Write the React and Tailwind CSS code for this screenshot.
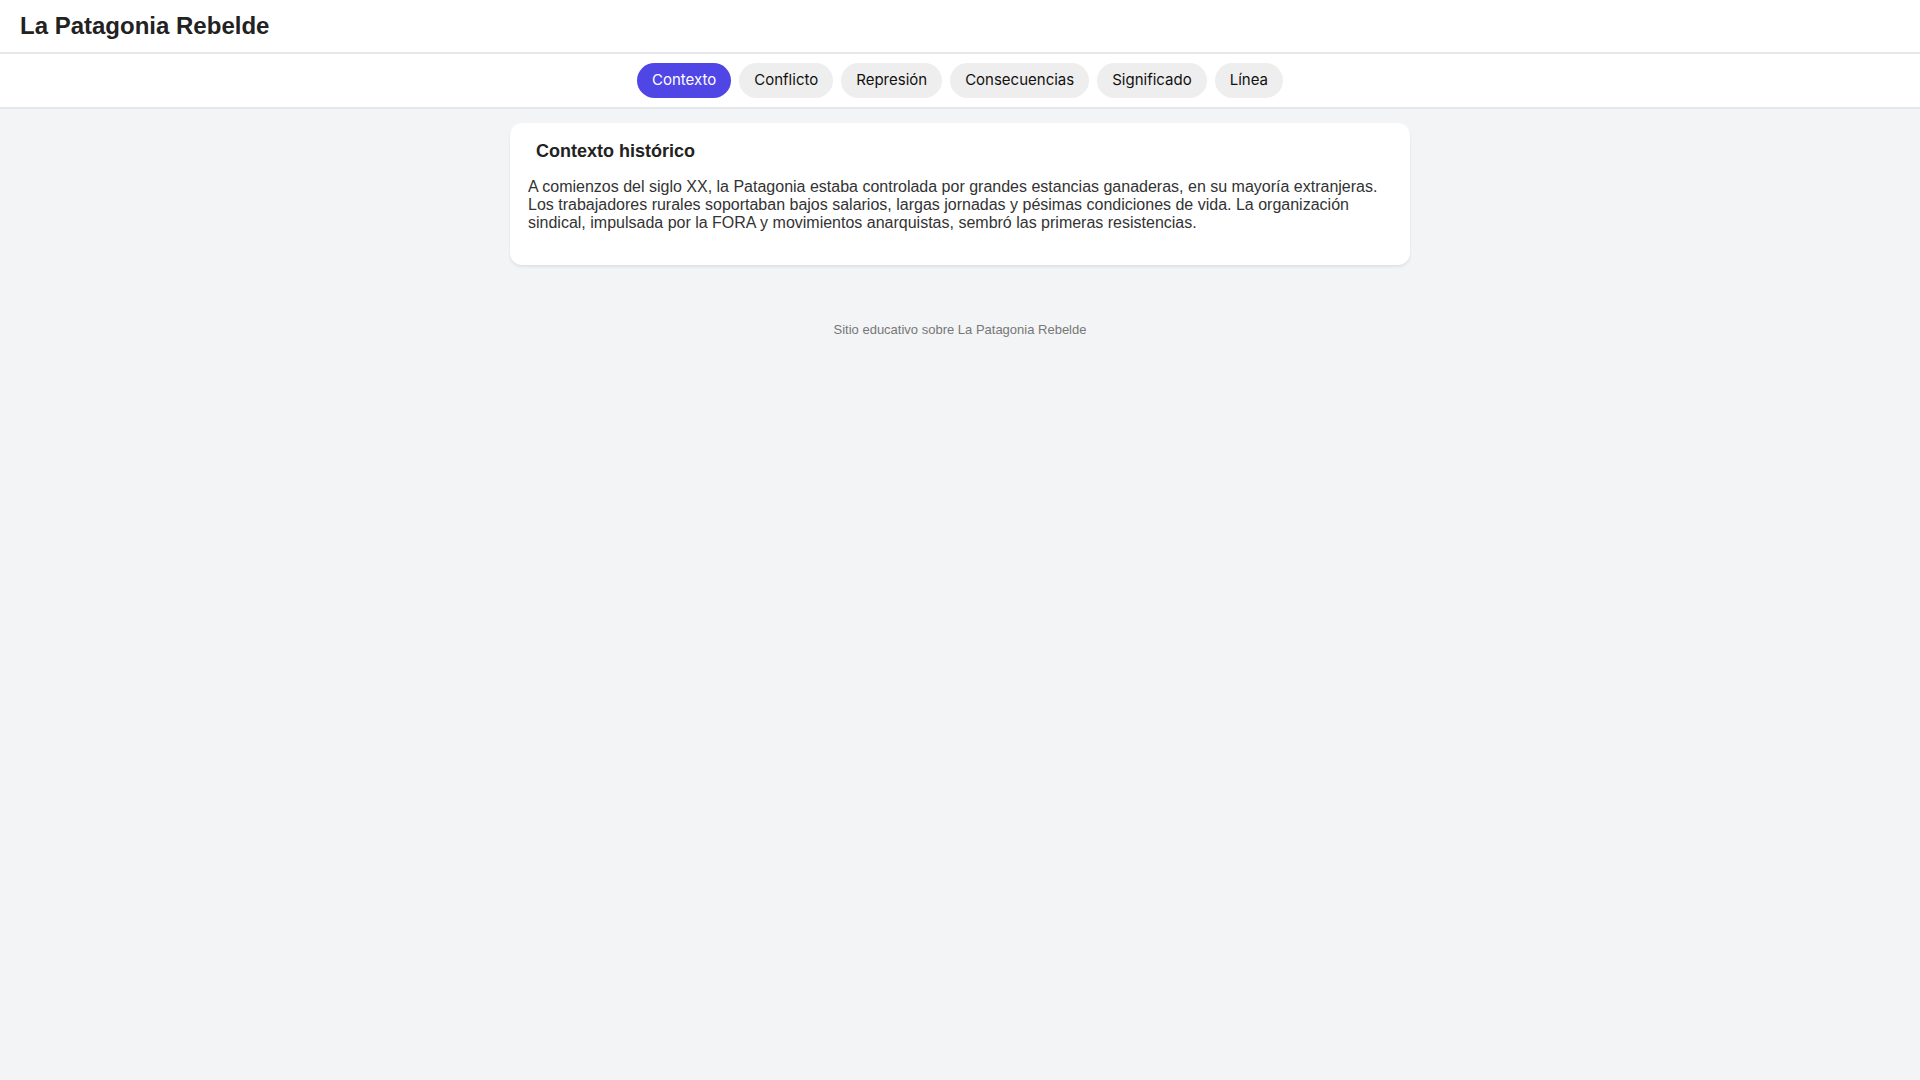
import { useState } from "react";

const sections = [
  "Contexto",
  "Conflicto",
  "Represión",
  "Consecuencias",
  "Significado",
  "Línea",
];

const content = {
  Contexto: {
    title: "Contexto histórico",
    text: "A comienzos del siglo XX, la Patagonia estaba controlada por grandes estancias ganaderas, en su mayoría extranjeras. Los trabajadores rurales soportaban bajos salarios, largas jornadas y pésimas condiciones de vida. La organización sindical, impulsada por la FORA y movimientos anarquistas, sembró las primeras resistencias.",
  },
};

const App = () => {
  const [active, setActive] = useState("Contexto");
  const current = content[active] || content.Contexto;

  return (
    <div className="min-h-screen bg-[#f3f4f6] font-['Liberation_Sans',Arial,sans-serif] text-[#222]">
      <header className="h-[54px] bg-white border-b-2 border-[#e5e7eb] flex items-center px-5">
        <h1 className="text-[24px] font-bold leading-none">La Patagonia Rebelde</h1>
      </header>

      <nav className="h-[55px] bg-white border-b-2 border-[#e5e7eb] flex items-center justify-center gap-2">
        {sections.map((s) => (
          <button
            key={s}
            onClick={() => setActive(s)}
            className={`h-[35px] px-[15px] rounded-full font-['Inter',sans-serif] text-[15px] ${
              active === s ? "bg-[#4f46e5] text-white" : "bg-[#eeeeee] text-[#111]"
            }`}
          >
            {s}
          </button>
        ))}
      </nav>

      <main className="w-[900px] mx-auto mt-[14px]">
        <section className="bg-white rounded-xl shadow-[0_2px_3px_rgba(0,0,0,0.08)] p-[18px] pb-[16px]">
          <h2 className="text-[18px] font-bold leading-[1.15] pl-2">{current.title}</h2>
          <p className="text-[16px] text-[#333] leading-[1.15] mt-4 mb-[16px]">{current.text}</p>
        </section>
      </main>

      <footer className="text-center text-[13px] text-[#777] mt-[55px]">
        Sitio educativo sobre La Patagonia Rebelde
      </footer>
    </div>
  );
};

export default App;
